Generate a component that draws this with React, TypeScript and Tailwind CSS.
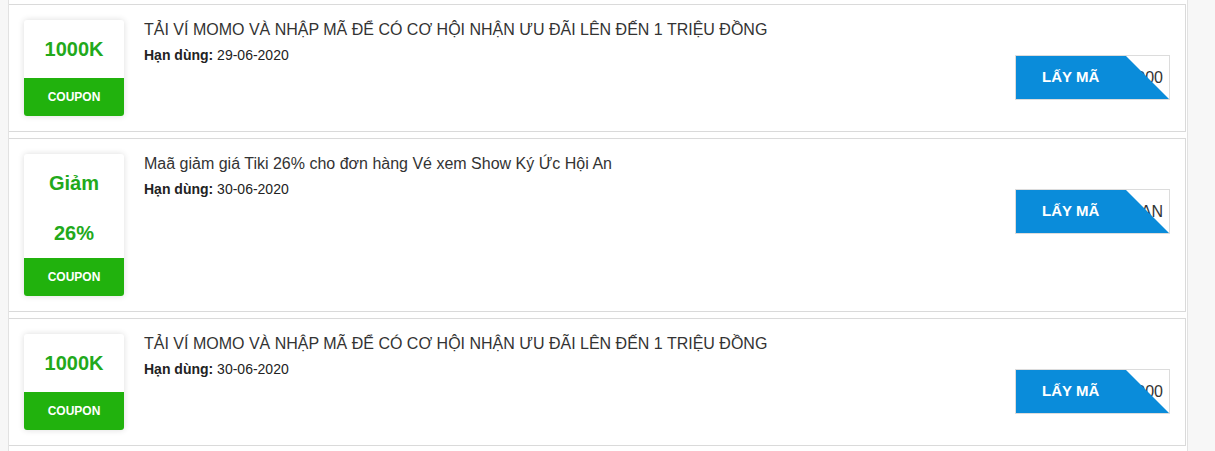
import React from "react";

type Coupon = {
  lines: string[];
  title: string;
  expires: string;
  code: string;
};

const COUPONS: Coupon[] = [
  {
    lines: ["1000K"],
    title: "TẢI VÍ MOMO VÀ NHẬP MÃ ĐỂ CÓ CƠ HỘI NHẬN ƯU ĐÃI LÊN ĐẾN 1 TRIỆU ĐỒNG",
    expires: "29-06-2020",
    code: "MOMO1000",
  },
  {
    lines: ["Giảm", "26%"],
    title: "Maã giảm giá Tiki 26% cho đơn hàng Vé xem Show Ký Ức Hội An",
    expires: "30-06-2020",
    code: "KYUCHOIAN",
  },
  {
    lines: ["1000K"],
    title: "TẢI VÍ MOMO VÀ NHẬP MÃ ĐỂ CÓ CƠ HỘI NHẬN ƯU ĐÃI LÊN ĐẾN 1 TRIỆU ĐỒNG",
    expires: "30-06-2020",
    code: "MOMO1000",
  },
];

function CouponBadge({ lines }: { lines: string[] }) {
  return (
    <div className="w-[100px] shrink-0 rounded-[3px] bg-white shadow-[0_0_6px_rgba(0,0,0,0.14)] overflow-hidden">
      {lines.length === 1 ? (
        <div className="h-[58px] flex items-center justify-center text-[20px] font-bold text-[#22a91b]">
          {lines[0]}
        </div>
      ) : (
        <div className="flex flex-col">
          <div className="h-[58px] flex items-center justify-center text-[20px] font-bold text-[#22a91b]">
            {lines[0]}
          </div>
          <div className="h-[46px] flex items-start justify-center pt-[10px] text-[20px] leading-[22px] font-bold text-[#22a91b]">
            {lines[1]}
          </div>
        </div>
      )}
      <div className="h-[38px] bg-[#21b20d] flex items-center justify-center text-[12px] font-bold text-white">
        COUPON
      </div>
    </div>
  );
}

function GetCodeButton({ code }: { code: string }) {
  return (
    <div className="relative mt-[35px] w-[155px] h-[45px] shrink-0 self-start border border-[#dcdcdc] bg-white overflow-hidden">
      <div className="h-full flex items-center justify-end pr-[6px] text-[16px] text-[#333]">
        {code}
      </div>
      <button className="absolute inset-[-1px] bg-[#0a8cda] [clip-path:polygon(0_0,110px_0,100%_100%,0_100%)] flex items-center pl-[27px] text-[15px] font-bold text-white">
        LẤY MÃ
      </button>
    </div>
  );
}

export default function App() {
  return (
    <div className="min-h-screen bg-[#f7f7f7] font-['Liberation_Sans',Arial,sans-serif]">
      <div className="ml-[8px] w-[1180px] min-h-screen bg-white border-l border-r border-[#e2e2e2] pt-[4px] flex flex-col gap-[6px]">
        {COUPONS.map((c, i) => (
          <div
            key={i}
            className="w-[1177px] border-t border-r border-b border-[#dadada] p-[15px] flex"
          >
            <CouponBadge lines={c.lines} />
            <div className="flex-1 pl-[20px]">
              <h3 className="pt-[1px] text-[16px] leading-[18px] text-[#333]">{c.title}</h3>
              <p className="mt-[7px] text-[14px] leading-[18px] text-[#222]">
                <span className="font-bold">Hạn dùng:</span> {c.expires}
              </p>
            </div>
            <GetCodeButton code={c.code} />
          </div>
        ))}
      </div>
    </div>
  );
}
